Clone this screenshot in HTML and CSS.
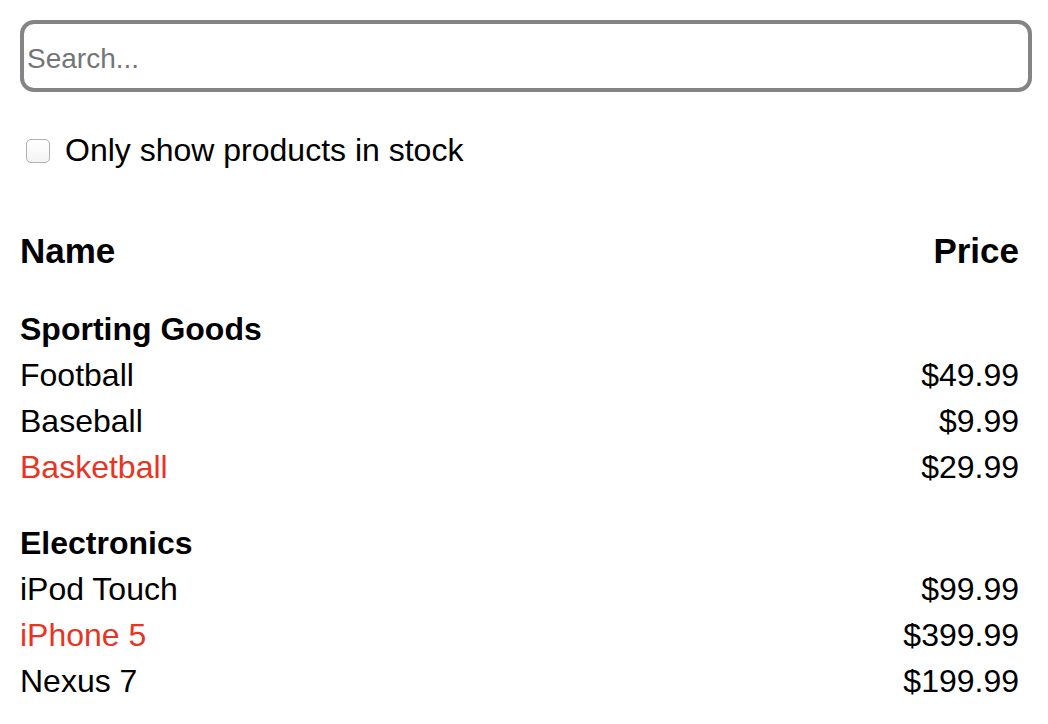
FILE: index.html
```html
<!DOCTYPE html>
<html>
<head>
<meta charset="utf-8">
<link rel="stylesheet" href="styles.css">
</head>
<body>
<div class="app">
  <form class="search-bar">
    <input class="search-input" type="text" placeholder="Search...">
    <label class="stock-label">
      <input class="stock-check" type="checkbox">
      <span>Only show products in stock</span>
    </label>
  </form>
  <table class="products">
    <thead>
      <tr><th class="name-col">Name</th><th class="price-col">Price</th></tr>
    </thead>
    <tbody>
      <tr class="category"><th colspan="2">Sporting Goods</th></tr>
      <tr><td>Football</td><td class="price">$49.99</td></tr>
      <tr><td>Baseball</td><td class="price">$9.99</td></tr>
      <tr><td class="out">Basketball</td><td class="price">$29.99</td></tr>
      <tr class="category"><th colspan="2">Electronics</th></tr>
      <tr><td>iPod Touch</td><td class="price">$99.99</td></tr>
      <tr><td class="out">iPhone 5</td><td class="price">$399.99</td></tr>
      <tr><td>Nexus 7</td><td class="price">$199.99</td></tr>
    </tbody>
  </table>
</div>
</body>
</html>
```

FILE: styles.css
```css
html, body {
  margin: 0;
  padding: 0;
  background: #ffffff;
}

body {
  font-family: "Liberation Sans", Arial, Helvetica, sans-serif;
  color: #000;
  font-size: 32px;
}

.app {
  padding: 20px 16px 0 20px;
}

.search-bar {
  display: flex;
  flex-direction: column;
  margin: 0;
}

.search-input {
  box-sizing: border-box;
  width: 1012px;
  height: 72px;
  margin: 0;
  padding: 6px 0 0 3px;
  border: 4px solid #848484;
  border-radius: 14px;
  font-family: "Liberation Sans", Arial, sans-serif;
  font-size: 28px;
  color: #000;
  outline: none;
  background: #fff;
}

.search-input::placeholder {
  color: #757575;
}

.stock-label {
  display: flex;
  align-items: center;
  gap: 15px;
  margin-top: 35px;
  height: 46px;
  line-height: 46px;
  padding-left: 6px;
}

.stock-check {
  appearance: none;
  -webkit-appearance: none;
  box-sizing: border-box;
  width: 24px;
  height: 24px;
  margin: 2px 0 0 0;
  border: 1.5px solid #b0b0b0;
  border-radius: 5px;
  background: linear-gradient(#ffffff, #f4f4f4);
}

.products {
  width: 999px;
  margin-top: 53px;
  border-collapse: collapse;
}

.products th,
.products td {
  padding: 0;
  text-align: left;
  height: 46px;
  line-height: 46px;
  white-space: nowrap;
}

.products thead th {
  font-size: 35px;
  height: 50px;
  line-height: 50px;
  font-weight: bold;
}

.products thead th.price-col,
.products td.price {
  text-align: right;
}

.category th {
  font-weight: bold;
  padding-top: 30px;
}

.out {
  color: #ea3323;
}
```
